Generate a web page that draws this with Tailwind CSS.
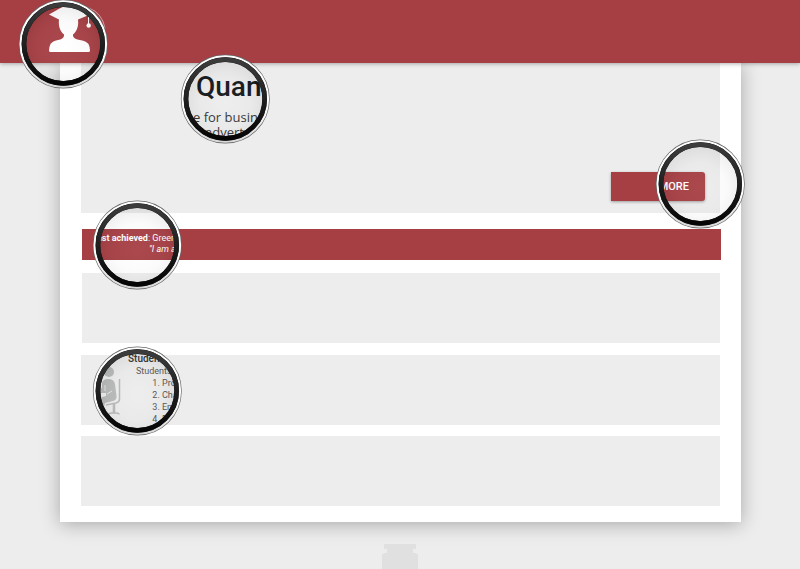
<!DOCTYPE html>
<html lang="en">
<head>
<meta charset="utf-8">
<meta name="viewport" content="width=device-width, initial-scale=1">
<title>Quan</title>
<script src="https://cdn.jsdelivr.net/npm/@tailwindcss/browser@4"></script>
</head>
<body class="h-screen overflow-hidden flex flex-col bg-[#ededed] font-[Roboto,sans-serif]">

<!-- Shared lens frame: dark bezel, chrome rim and glass tint -->
<svg class="absolute w-0 h-0" aria-hidden="true">
  <defs>
    <linearGradient id="bezel" x1="0" y1="0" x2="0" y2="1">
      <stop offset="0" stop-color="#3c3c3c"/><stop offset=".5" stop-color="#202020"/><stop offset="1" stop-color="#050505"/>
    </linearGradient>
    <linearGradient id="rim" x1="0" y1="0" x2="0" y2="1">
      <stop offset="0" stop-color="#fff"/><stop offset=".6" stop-color="#fff"/><stop offset="1" stop-color="#d8d8d8"/>
    </linearGradient>
    <radialGradient id="glass" cx=".5" cy=".55" r=".55">
      <stop offset="0" stop-color="#fff" stop-opacity=".05"/><stop offset=".6" stop-color="#aaa" stop-opacity=".05"/><stop offset="1" stop-color="#000" stop-opacity=".07"/>
    </radialGradient>
    <symbol id="lens" viewBox="0 0 90 90">
      <circle cx="45.300" cy="45" r="38" fill="url(#glass)"/>
      <circle cx="45.300" cy="45" r="42.800" fill="none" stroke="#666" stroke-width="3.300"/>
      <circle cx="45.300" cy="45" r="42.800" fill="none" stroke="url(#rim)" stroke-width="2"/>
      <circle cx="45.300" cy="45" r="39.300" fill="none" stroke="#111" stroke-width="4.700"/>
      <circle cx="45.300" cy="45" r="39.300" fill="none" stroke="url(#bezel)" stroke-width="4.300"/>
    </symbol>
  </defs>
</svg>

<header class="relative z-10 h-[63px] shrink-0 bg-[#a63f44] shadow-[0_1px_4px_rgba(0,0,0,0.3)]">
  <a href="#" aria-label="Student profile" class="absolute left-[18px] top-[-1px] block size-[90px]">
    <svg class="absolute inset-0 size-full" viewBox="0 0 90 90" aria-hidden="true">
      <path d="M71 9Q84 14 87 29" fill="none" stroke="#fff" stroke-opacity=".5" stroke-width="1"/>
      <path fill="#fff" d="M31 15.500 46 7H60L71 16 60 20.500C61 28 58 33 55 35.500V37C56 42 67 40 70.500 45Q72 48 72 51.500Q72 53 70.500 53H32.500Q31 53 31 51.500Q31 48 32.500 45C36 40 45 42 46 37V35.500C43 33 40 28 41 20.500Z"/>
      <path d="M70.500 15V25" stroke="#fff" stroke-width="1"/>
      <circle cx="70.700" cy="26.500" r="2.200" fill="#fff"/>
    </svg>
    <svg class="absolute inset-0 size-full" aria-hidden="true"><use href="#lens"/></svg>
  </a>
</header>

<main class="shrink-0 ml-[60px] mr-[59px] px-[21px] pb-4 bg-white shadow-[0_2px_18px_rgba(0,0,0,0.3)]">

  <section class="relative h-[150px] bg-[#ededed] flex items-end justify-end pr-[15px] pb-3">
    <button type="button" class="w-[94px] h-[29px] pr-4 pt-[2px] rounded-r-[3px] bg-[#a63f44] text-white text-[11px] font-medium text-right shadow-[0_1px_3px_rgba(0,0,0,0.35)]">MORE</button>

    <div class="absolute z-20 left-[99px] -top-[9px] size-[90px]">
      <div class="absolute inset-[7px] rounded-full overflow-hidden bg-[#ededed] pt-[10px] pl-[9px] whitespace-nowrap text-[#14171a]">
        <h1 class="text-[28px] leading-[32px] font-medium">Quan</h1>
        <p class="-ml-[3px] pt-[7px] font-['Open_Sans',sans-serif] text-[13px] leading-[15px] text-[#333]">e for busin<br><span class="pl-[12px]">advert</span></p>
      </div>
      <svg class="absolute inset-0 size-full" aria-hidden="true"><use href="#lens"/></svg>
    </div>

    <svg class="absolute -right-[25px] top-[76px] size-[90px] pointer-events-none" aria-hidden="true"><use href="#lens"/></svg>
  </section>

  <section class="relative mt-4 ml-px -mr-px h-[31px] bg-[#a63f44]">
    <div class="absolute left-[10px] -top-[29px] size-[90px]">
      <div class="absolute inset-[7px] rounded-full overflow-hidden pt-[26px] whitespace-nowrap text-white text-[9px] leading-[11px]">
        <p class="-ml-[2px]"><strong class="font-bold">ast achieved</strong>: Green</p>
        <p class="pl-[50px] italic">"I am a</p>
      </div>
      <svg class="absolute inset-0 size-full" aria-hidden="true"><use href="#lens"/></svg>
    </div>
  </section>

  <section class="mt-[13px] ml-px h-[70px] bg-[#ededed]"></section>

  <section class="relative mt-3 h-[70px] bg-[#ededed]">
    <div class="absolute left-[11px] -top-[9px] size-[90px]">
      <div class="absolute inset-[7px] rounded-full overflow-hidden bg-[#ededed] whitespace-nowrap text-[9px] leading-[12px] text-[#555]">
        <svg class="absolute left-0 top-[12px] w-[24px] h-[50px]" viewBox="0 0 24 50" aria-hidden="true">
          <circle cx="10" cy="7" r="5" fill="#b8b9b9"/>
          <path fill="#b8b9b9" d="M3 18Q4 14 9 14Q15 14 16 19L17.500 31Q18 35 14 36L6 38 3 50H0V33L7 31V28H0V24L3 23Z"/>
          <path d="M6 20V26M8 29 13 26" fill="none" stroke="#ededed" stroke-width=".8"/>
          <path d="M20.500 14V34Q20.500 37 17 38L7 40M10 49.500Q10 48 13 48H17Q20 48 20 49.500" fill="none" stroke="#b8b9b9" stroke-width="1.500"/>
          <path d="M15 38V48" stroke="#b8b9b9" stroke-width="2.500"/>
        </svg>
        <h2 class="pl-[29px] text-[10px] font-medium text-[#333]">Students</h2>
        <p class="pl-[37px]">Students</p>
        <ol class="pl-[63px] list-decimal">
          <li>Proj</li>
          <li>Cha</li>
          <li>Eng</li>
          <li>Pro</li>
        </ol>
      </div>
      <svg class="absolute inset-0 size-full" aria-hidden="true"><use href="#lens"/></svg>
    </div>
  </section>

  <section class="mt-[11px] h-[70px] bg-[#ededed]"></section>
</main>

<footer class="mt-[22px] flex justify-center">
  <svg class="w-[36px] h-[26px]" viewBox="0 0 36 26" aria-hidden="true">
    <path fill="#e0e0e0" d="M2 0H34V5H31V9H33Q36 9 36 13V26H0V13Q0 9 3 9H5V5H2Z"/>
  </svg>
</footer>
</body>
</html>
